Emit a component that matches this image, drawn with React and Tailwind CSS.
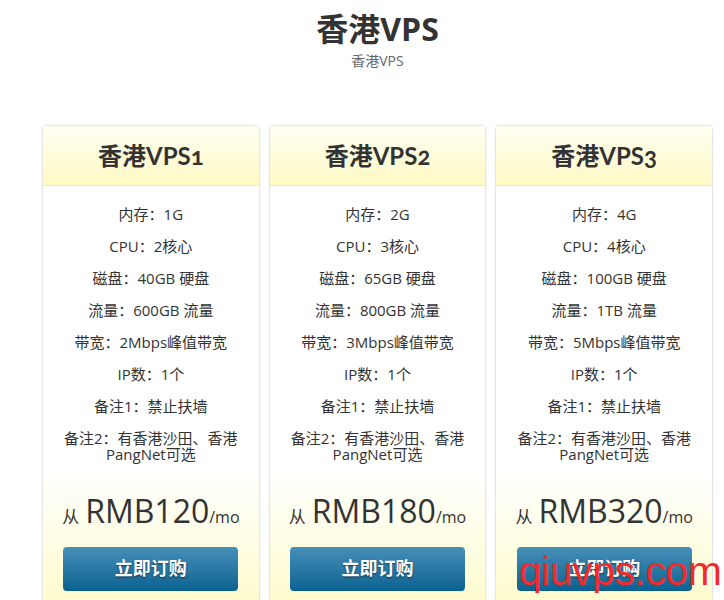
import React from 'react';

const plans = [
  {
    name: '香港VPS',
    num: '1',
    specs: ['内存：1G', 'CPU：2核心', '磁盘：40GB 硬盘', '流量：600GB 流量', '带宽：2Mbps峰值带宽', 'IP数：1个', '备注1：禁止扶墙'],
    price: 'RMB120',
  },
  {
    name: '香港VPS',
    num: '2',
    specs: ['内存：2G', 'CPU：3核心', '磁盘：65GB 硬盘', '流量：800GB 流量', '带宽：3Mbps峰值带宽', 'IP数：1个', '备注1：禁止扶墙'],
    price: 'RMB180',
  },
  {
    name: '香港VPS',
    num: '3',
    specs: ['内存：4G', 'CPU：4核心', '磁盘：100GB 硬盘', '流量：1TB 流量', '带宽：5Mbps峰值带宽', 'IP数：1个', '备注1：禁止扶墙'],
    price: 'RMB320',
  },
];

const PlanCard = ({ plan }) => (
  <div className="flex w-[218px] flex-col overflow-hidden rounded-t-[4px] border border-[#e6e6e6] bg-white shadow-[0_0_3px_rgba(0,0,0,0.06)]">
    <div className="flex h-[60px] items-center justify-center border-b border-[#f3eba0] bg-gradient-to-b from-[#fffff2] to-[#fff9c4]">
      <h3 className="font-['Lato','Noto_Sans_CJK_SC',sans-serif] text-[24px] font-bold text-[#333] [font-variant-numeric:oldstyle-nums]">
        {plan.name}
        {plan.num}
      </h3>
    </div>

    <div className="pt-[12px] text-center text-[15px] leading-4 text-[#333]">
      {plan.specs.map((spec) => (
        <p key={spec} className="py-2">
          {spec}
        </p>
      ))}
      <p className="px-2 py-2">
        备注2：有香港沙田、香港
        <br />
        PangNet可选
      </p>
    </div>

    <div className="flex flex-1 flex-col items-center bg-gradient-to-b from-white to-[#fffbc6] pb-[30px] pt-[26px]">
      <div className="flex items-baseline text-[#333]">
        <span className="text-[17px]">从</span>
        <span className="ml-[6px] text-[32px] leading-[30px]">{plan.price}</span>
        <span className="text-[16px]">/mo</span>
      </div>
      <button
        type="button"
        className="mt-[17px] h-[44px] w-[175px] rounded-[4px] bg-gradient-to-b from-[#4590b9] to-[#066290] text-[18px] font-bold text-white [text-shadow:0_1px_2px_rgba(0,0,0,0.55)]"
      >
        立即订购
      </button>
    </div>
  </div>
);

const App = () => {
  return (
    <div className="relative h-[600px] w-[724px] overflow-hidden bg-white font-['Open_Sans','Noto_Sans_CJK_SC',sans-serif]">
      <div className="ml-[42px] w-[671px]">
        <div className="pt-[9px] text-center">
          <h1 className="text-[32px] font-bold leading-[40px] text-[#333]">香港VPS</h1>
          <p className="mt-[2px] text-[14px] leading-5 text-[#666]">香港VPS</p>
        </div>

        <div className="mt-[54px] flex gap-[9px]">
          {plans.map((plan) => (
            <PlanCard key={plan.num} plan={plan} />
          ))}
        </div>
      </div>

      <span className="absolute left-[519px] top-[548px] font-['Liberation_Sans',sans-serif] text-[41px] leading-[46px] tracking-[-0.5px] text-[#f42a2a]">
        qiuvps.com
      </span>
    </div>
  );
};

export default App;
